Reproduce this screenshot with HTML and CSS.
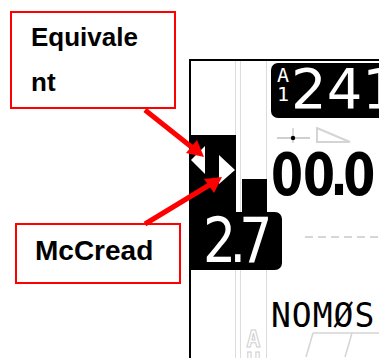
FILE: index.html
```html
<!DOCTYPE html>
<html>
<head>
<meta charset="utf-8">
<link rel="stylesheet" href="styles.css">
</head>
<body>
<div class="page">
  <div class="notes">
    <div class="note note-eq"><span class="note-text">Equivalent</span></div>
    <div class="note note-mc"><span class="note-text">McCread</span></div>
  </div>
  <div class="screen">
    <div class="gauges">
      <div class="g-row g-top">
        <div class="ga"></div><div class="gap"></div><div class="gb"></div>
      </div>
      <div class="g-row g-mid">
        <div class="ga ga-black">
          <svg class="tri" width="44" height="77" viewBox="0 0 44 77">
            <polygon points="0,25 14,11 14,39" fill="#fff"/>
            <polygon points="28,20 28,49 44,35" fill="#fff"/>
          </svg>
        </div>
        <div class="gap"></div>
        <div class="gb gb-split"><div class="gb-space"></div><div class="gb-bar"></div></div>
      </div>
      <div class="mc-box"><span class="mc-value">2.7</span></div>
      <div class="g-row g-bottom">
        <div class="ga"></div><div class="gap"></div>
        <div class="gb gb-letters"><span class="outline">A</span><span class="outline">U</span></div>
      </div>
    </div>
    <div class="main">
      <div class="wp-box">
        <div class="wp-tag"><span>A</span><span>1</span></div>
        <span class="wp-num">241</span>
      </div>
      <svg class="icons" width="108" height="17" viewBox="0 0 108 17">
        <line x1="6" y1="11" x2="39" y2="11" stroke="#cfcfcf" stroke-width="2"/>
        <line x1="22" y1="1" x2="22" y2="16" stroke="#cfcfcf" stroke-width="1.5"/>
        <circle cx="22" cy="11" r="2.2" fill="#000"/>
        <polygon points="46,1 46,15 79,15" fill="none" stroke="#d4d4d4" stroke-width="2"/>
      </svg>
      <div class="alt"><span class="alt-text">00<span class="pt">.</span>0</span></div>
      <div class="dash"></div>
      <div class="name">NOMØS</div>
      <svg class="lanes" width="108" height="25" viewBox="0 0 108 25">
        <line x1="42" y1="1" x2="108" y2="1" stroke="#d4d4d4" stroke-width="1.5"/>
        <line x1="42" y1="1" x2="35" y2="25" stroke="#d4d4d4" stroke-width="1.5"/>
        <line x1="81" y1="1" x2="74" y2="25" stroke="#d4d4d4" stroke-width="1.5"/>
      </svg>
    </div>
  </div>
  <svg class="arrows" width="379" height="358" viewBox="0 0 379 358">
    <line x1="145" y1="110" x2="194" y2="149" stroke="#f00" stroke-width="5"/>
    <polygon points="204,157 186,153 197,140" fill="#f00"/>
    <line x1="145" y1="224" x2="211" y2="184" stroke="#f00" stroke-width="5"/>
    <polygon points="222,177 214,193 204,179" fill="#f00"/>
  </svg>
</div>
</body>
</html>
```

FILE: styles.css
```css
html, body {
  margin: 0;
  padding: 0;
  background: #fff;
}
body {
  width: 379px;
  height: 358px;
  overflow: hidden;
  font-family: "Liberation Sans", Arial, sans-serif;
}
.page {
  position: relative;
  display: flex;
  width: 379px;
  height: 358px;
}
.notes {
  flex: 0 0 189px;
  display: flex;
  flex-direction: column;
}
.note {
  box-sizing: border-box;
  border: 2px solid #f00;
  width: 166px;
  font-weight: bold;
  color: #000;
  flex: 0 0 auto;
}
.note-eq {
  margin: 11px 0 0 10px;
  height: 98px;
  padding: 2px 0 0 19px;
  font-size: 26px;
  line-height: 45px;
}
.note-eq .note-text {
  display: block;
  width: 115px;
  word-break: break-all;
}
.note-mc {
  margin: 114px 0 0 15px;
  height: 61px;
  padding: 10px 0 0 18px;
  font-size: 28px;
  line-height: 32px;
  white-space: nowrap;
  overflow: hidden;
}
.screen {
  box-sizing: border-box;
  margin-top: 59px;
  flex: 0 0 190px;
  height: 299px;
  border-left: 2px solid #000;
  border-top: 2px solid #000;
  display: flex;
  overflow: hidden;
}
.gauges {
  flex: 0 0 76px;
  width: 76px;
  min-width: 0;
  display: flex;
  flex-direction: column;
}
.g-row {
  display: flex;
  flex-shrink: 0;
}
.ga {
  width: 44px;
  border-right: 1px solid #dcdcdc;
}
.gap {
  width: 4px;
}
.gb {
  width: 25px;
  border-left: 1px solid #dcdcdc;
  border-right: 1px solid #dcdcdc;
}
.g-top {
  height: 74px;
}
.g-mid {
  height: 77px;
}
.ga-black {
  background: #000;
  border-right-color: #000;
}
.tri {
  display: block;
}
.gb-split {
  display: flex;
  flex-direction: column;
}
.gb-space {
  height: 44px;
}
.gb-bar {
  flex: 1;
  background: #000;
  margin: 0 -1px 0 1px;
}
.mc-box {
  box-sizing: border-box;
  margin-left: -2px;
  width: 93px;
  height: 58px;
  flex: 0 0 auto;
  background: #000;
  border-radius: 0 7px 7px 0;
  color: #fff;
  display: flex;
  align-items: center;
  padding-left: 14px;
}
.mc-value {
  display: inline-block;
  font-family: "DejaVu Sans", sans-serif;
  font-size: 62px;
  line-height: 58px;
  letter-spacing: -8px;
  transform: scaleX(0.84);
  transform-origin: 0 50%;
  white-space: nowrap;
}
.g-bottom {
  flex: 1 1 0;
  min-height: 0;
  overflow: hidden;
}
.gb-letters {
  display: flex;
  flex-direction: column;
  align-items: center;
  padding-top: 58px;
}
.outline {
  font-family: "DejaVu Sans Mono", monospace;
  font-weight: bold;
  font-size: 23px;
  line-height: 22px;
  color: #fff;
  -webkit-text-stroke: 1px #cfcfcf;
}
.main {
  flex: 1;
  min-width: 0;
  display: flex;
  flex-direction: column;
  padding-left: 4px;
}
.wp-box {
  margin-top: 2px;
  height: 55px;
  width: 130px;
  flex: 0 0 auto;
  background: #000;
  border-radius: 7px 0 0 7px;
  color: #fff;
  display: flex;
  align-items: flex-start;
}
.wp-tag {
  display: flex;
  flex-direction: column;
  margin: 3px 0 0 6px;
  font-family: "DejaVu Sans Mono", monospace;
  font-size: 20px;
  line-height: 19px;
}
.wp-num {
  margin: -2px 0 0 2px;
  font-family: "DejaVu Sans", sans-serif;
  font-size: 56px;
  line-height: 55px;
  white-space: nowrap;
}
.icons {
  display: block;
  margin-top: 9px;
  flex: 0 0 auto;
}
.alt {
  margin-top: 2px;
  height: 58px;
  flex: 0 0 auto;
  white-space: nowrap;
}
.alt-text {
  display: inline-block;
  font-family: "DejaVu Sans", sans-serif;
  font-weight: bold;
  font-size: 59px;
  line-height: 58px;
  color: #000;
  transform: scaleX(0.78);
  transform-origin: 0 50%;
}
.pt {
  margin: 0 -6px;
}
.dash {
  margin: 32px 0 0 34px;
  height: 2px;
  flex: 0 0 auto;
  background: repeating-linear-gradient(90deg, #d6d6d6 0 8px, transparent 8px 13px);
}
.name {
  margin-top: 61px;
  flex: 0 0 auto;
  font-family: "DejaVu Sans Mono", monospace;
  font-size: 33px;
  line-height: 33px;
  letter-spacing: 1px;
  white-space: nowrap;
  color: #000;
}
.lanes {
  display: block;
  flex: 0 0 auto;
}
.arrows {
  position: absolute;
  left: 0;
  top: 0;
  pointer-events: none;
}
```
